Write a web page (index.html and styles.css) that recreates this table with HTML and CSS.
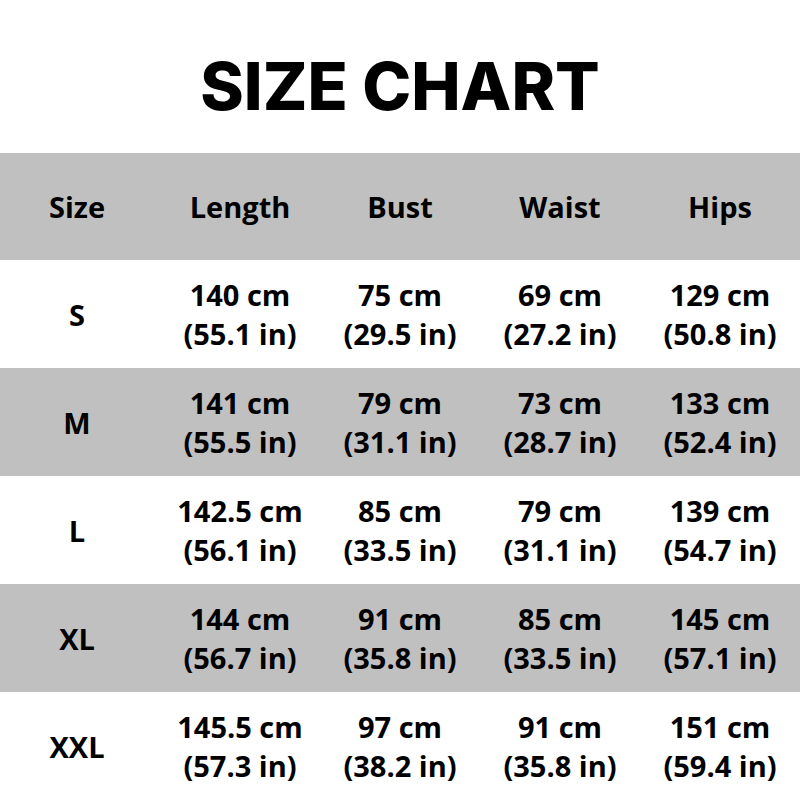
FILE: index.html
```html
<!DOCTYPE html>
<html>
<head>
<meta charset="utf-8">
<link rel="stylesheet" href="styles.css">
</head>
<body>
<div class="page">
  <h1 class="title">SIZE CHART</h1>
  <div class="chart">
    <div class="row head">
      <div class="cell size">Size</div>
      <div class="cell">Length</div>
      <div class="cell">Bust</div>
      <div class="cell">Waist</div>
      <div class="cell">Hips</div>
    </div>
    <div class="row">
      <div class="cell size">S</div>
      <div class="cell">140 cm<br>(55.1 in)</div>
      <div class="cell">75 cm<br>(29.5 in)</div>
      <div class="cell">69 cm<br>(27.2 in)</div>
      <div class="cell">129 cm<br>(50.8 in)</div>
    </div>
    <div class="row alt">
      <div class="cell size">M</div>
      <div class="cell">141 cm<br>(55.5 in)</div>
      <div class="cell">79 cm<br>(31.1 in)</div>
      <div class="cell">73 cm<br>(28.7 in)</div>
      <div class="cell">133 cm<br>(52.4 in)</div>
    </div>
    <div class="row">
      <div class="cell size">L</div>
      <div class="cell">142.5 cm<br>(56.1 in)</div>
      <div class="cell">85 cm<br>(33.5 in)</div>
      <div class="cell">79 cm<br>(31.1 in)</div>
      <div class="cell">139 cm<br>(54.7 in)</div>
    </div>
    <div class="row alt">
      <div class="cell size">XL</div>
      <div class="cell">144 cm<br>(56.7 in)</div>
      <div class="cell">91 cm<br>(35.8 in)</div>
      <div class="cell">85 cm<br>(33.5 in)</div>
      <div class="cell">145 cm<br>(57.1 in)</div>
    </div>
    <div class="row">
      <div class="cell size">XXL</div>
      <div class="cell">145.5 cm<br>(57.3 in)</div>
      <div class="cell">97 cm<br>(38.2 in)</div>
      <div class="cell">91 cm<br>(35.8 in)</div>
      <div class="cell">151 cm<br>(59.4 in)</div>
    </div>
  </div>
</div>
</body>
</html>
```
FILE: styles.css
```css
html, body {
  margin: 0;
  padding: 0;
  background: #fff;
}
.page {
  width: 800px;
  height: 800px;
  display: flex;
  flex-direction: column;
  overflow: hidden;
}
.title {
  margin: 0;
  height: 153px;
  display: flex;
  align-items: center;
  justify-content: center;
  font-family: Inter, "Liberation Sans", sans-serif;
  font-weight: 800;
  font-size: 66px;
  letter-spacing: 0;
  color: #000;
  padding-top: 18px;
  box-sizing: border-box;
}
.chart {
  display: flex;
  flex-direction: column;
}
.row {
  display: grid;
  grid-template-columns: repeat(5, 160px);
  height: 108px;
  align-items: center;
  font-family: "Open Sans", "Noto Sans", sans-serif;
  font-weight: 700;
  font-size: 29px;
  line-height: 39px;
  color: #000;
  text-align: center;
}
.head {
  height: 107px;
  background: #c0c0c0;
}
.alt {
  background: #c0c0c0;
}
.cell.size {
  padding-right: 6px;
}
```
